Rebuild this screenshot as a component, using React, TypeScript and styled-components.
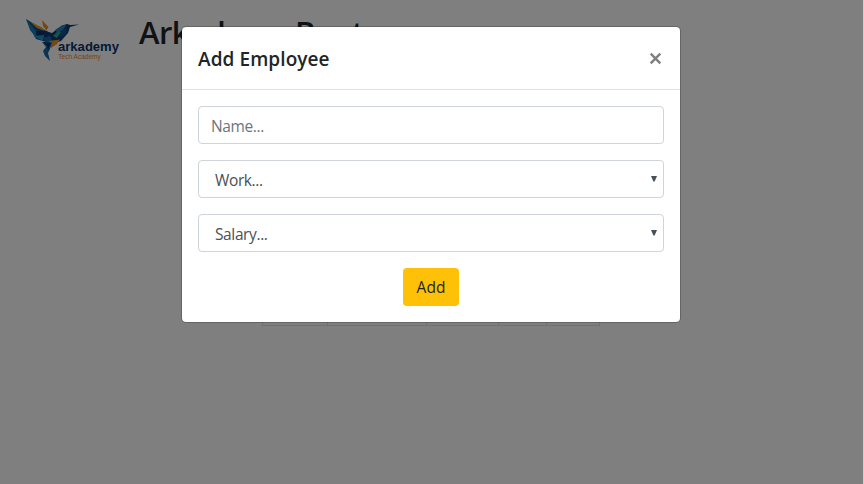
import React from 'react';
import styled, { createGlobalStyle } from 'styled-components';

const Global = createGlobalStyle`
  *, *::before, *::after { box-sizing: border-box; }
  html { background: #fff; overflow: hidden; }
  body { margin: 0; font-family: 'Open Sans', 'Noto Sans', sans-serif; font-size: 16px; line-height: 1.5; color: #212529; }
`;

const Page = styled.div`
  height: 484px;
  width: 864px;
  overflow: hidden;
  position: relative;
  background: #fff;
  border-right: 1px solid #d0d0d0;
`;

const Header = styled.header`
  display: flex;
  align-items: flex-start;
  height: 100px;
  padding: 13px 0 0 20px;
  gap: 15px;
`;

const Title = styled.h1`
  margin: 0;
  font-size: 31px;
  font-weight: 600;
  line-height: 38px;
  letter-spacing: -0.55px;
  white-space: nowrap;
`;

const Logo = styled.svg`
  width: 104px;
  height: 52px;
  flex: none;
`;

const Table = styled.div`
  display: grid;
  grid-template-columns: 65px 99px 72px 48px 53px;
  width: 338px;
  height: 226px;
  margin-left: 262px;
  border-left: 1px solid #dee2e6;
  border-bottom: 1px solid #dee2e6;
`;

const Cell = styled.div`
  border-right: 1px solid #dee2e6;
`;

const Backdrop = styled.div`
  position: absolute;
  inset: 0;
  background: rgba(0, 0, 0, 0.5);
`;

const Modal = styled.section`
  position: absolute;
  left: 181px;
  top: 26px;
  width: 500px;
  height: 297px;
  background: #fff;
  background-clip: padding-box;
  border: 1px solid rgba(0, 0, 0, 0.2);
  border-radius: 5px;
`;

const ModalHeader = styled.div`
  display: flex;
  justify-content: space-between;
  align-items: center;
  height: 63px;
  padding: 0 18px 0 16px;
  border-bottom: 1px solid #dee2e6;
`;

const ModalTitle = styled.h5`
  margin: 2px 0 0;
  font-size: 19px;
  font-weight: 600;
  line-height: 30px;
  letter-spacing: 0.08px;
`;

const Close = styled.button`
  width: 13px;
  height: 13px;
  padding: 0;
  border: 0;
  background: none;
  display: flex;
`;

const Form = styled.form`
  display: flex;
  flex-direction: column;
  gap: 16px;
  padding: 16px;
`;

const Field = styled.div<{ $select?: boolean }>`
  display: flex;
  align-items: center;
  justify-content: space-between;
  height: 38px;
  padding: 4px 5px 0 ${(p) => (p.$select ? 16 : 12)}px;
  border: 1px solid #ced4da;
  border-radius: 4px;
  font-size: 15.5px;
  letter-spacing: -0.38px;
  color: ${(p) => (p.$select ? '#495057' : '#6c757d')};
`;

const Arrow = styled.svg`
  width: 8px;
  height: 6px;
  margin-top: -4px;
`;

const AddButton = styled.button`
  align-self: center;
  width: 56px;
  height: 38px;
  padding: 1px 0 0;
  border: 0;
  border-radius: 4px;
  background: #ffc107;
  color: #212529;
  font: inherit;
  font-size: 15.5px;
`;

const Caret = () => (
  <Arrow viewBox="0 0 8 6"><path d="M1 0h6L4.6 5.5H3.4Z" fill="#495057" /></Arrow>
);

export default function App() {
  return (
    <Page>
      <Global />
      <Header>
        <Logo viewBox="20 13 104 52">
          <path d="M26 19L43 29L52 34L43 41L36 39Z" fill="#0d4f8a" />
          <path d="M26 19L30 30L37 39L36 31Z" fill="#1b7ab5" />
          <path d="M29 21L42 27.5L45 31L37 28Z" fill="#f59a20" />
          <path d="M42 20L48.5 27L46.5 30.5L43 26Z" fill="#ef8d22" />
          <path d="M36 31L45 31L43 36L37 39Z" fill="#093468" />
          <path d="M33 36L45 35L50 40L43 41Z" fill="#2c91c4" />
          <path d="M45 31L52 33L62 25.5L67 24L70 25L79 24.5L70 27L68 33L61 41L52 44L43 41Z" fill="#0a3b70" />
          <path d="M55 30L62 25.5L66 25L64 29L58 33Z" fill="#2680b8" />
          <path d="M53 36L58 31L61 32L57 38Z" fill="#24a99b" />
          <path d="M61 32L67 28L66 34L60 38Z" fill="#10548d" />
          <path d="M43 38L50 36L53 42L47 44Z" fill="#1769a5" />
          <path d="M49 41L60 39.5L57 44L51 48Z" fill="#f09121" />
          <path d="M42 42L52 42L50 49L48 53L50 61L45 56L43 51L46 47Z" fill="#1768a5" />
          <path d="M43 42L51 43L48 50L47 46Z" fill="#083063" />
          <text x="58" y="51.3" fontFamily="Liberation Sans" fontSize="12.5" fontWeight="700" fill="#07336c" textLength="61" lengthAdjust="spacingAndGlyphs">arkademy</text>
          <text x="58.3" y="59.3" fontFamily="Liberation Sans" fontSize="7.3" fill="#ed8a28" textLength="42.5" lengthAdjust="spacingAndGlyphs">Tech Academy</text>
        </Logo>
        <Title>Arkademy Bootcamp</Title>
      </Header>
      <Table><Cell /><Cell /><Cell /><Cell /><Cell /></Table>
      <Backdrop />
      <Modal role="dialog" aria-label="Add Employee">
        <ModalHeader>
          <ModalTitle>Add Employee</ModalTitle>
          <Close aria-label="Close">
            <svg width="13" height="13" viewBox="0 0 13 13"><path d="M1.7 1.7l9.6 9.6M11.3 1.7l-9.6 9.6" stroke="#7f7f7f" strokeWidth="2.4" /></svg>
          </Close>
        </ModalHeader>
        <Form>
          <Field>Name...</Field>
          <Field $select>Work...<Caret /></Field>
          <Field $select>Salary...<Caret /></Field>
          <AddButton type="button">Add</AddButton>
        </Form>
      </Modal>
    </Page>
  );
}
